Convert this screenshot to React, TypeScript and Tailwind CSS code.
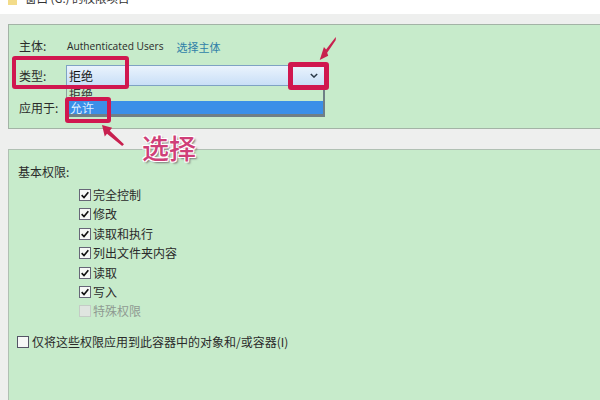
const cjk = { fontFamily: '"Noto Sans CJK SC", "Liberation Sans", sans-serif' };

function Check({ label, on = true, disabled = false }: { label: string; on?: boolean; disabled?: boolean }) {
  return (
    <div className={`flex items-center h-[19.4px] gap-[2px] text-[12px] ${disabled ? 'text-[#8f9a92]' : 'text-[#2a2a2a]'}`}>
      <span className={`w-[12px] h-[12px] border flex items-center justify-center ${disabled ? 'border-[#c4ccc6] bg-[#dfe5e0]' : 'border-[#667] bg-[#f6f8f6]'}`}>
        {on && (
          <svg viewBox="0 0 12 12" className="w-[10px] h-[10px]">
            <path d="M2 6.2 L4.8 9 L10 2.8" fill="none" stroke="#111" strokeWidth="2" />
          </svg>
        )}
      </span>
      <span>{label}</span>
    </div>
  );
}

function Arrow({ className, flip }: { className: string; flip?: boolean }) {
  return (
    <svg viewBox="0 0 24 24" preserveAspectRatio="none" className={`absolute ${className}`}>
      <path
        d={flip ? 'M0 0 L11 3 L8.5 6.5 L24 22 L22 24 L5.5 10 L3 13 Z' : 'M24 0 L22 1.5 L10 13 L7 10.5 L1 24 L13 19.5 L11.5 16.5 L23.5 3.5 Z'}
        fill="#c8204f"
      />
    </svg>
  );
}

export default function App() {
  return (
    <div className="relative w-[600px] h-[400px] overflow-hidden bg-[#eeefee] text-[#2a2a2a]" style={cjk}>
      <div className="h-[14px] bg-white flex items-start pl-[8px] overflow-hidden">
        <span className="w-[9px] h-[5px] bg-[#f3dc8a] mr-[8px] shrink-0" />
        <span className="text-[11.5px] leading-[14px] -translate-y-[9px] text-[#333]">窗口 (G:) 的权限项目</span>
      </div>
      <div className="pl-[8px] pt-[10px]">
        <section className="h-[105px] bg-[#c7ebcb] border border-[#a3b3a6] border-r-0 pl-[10px] pt-[11px]">
          <div className="flex items-center h-[20px] text-[12px]">
            <span className="w-[48px]">主体:</span>
            <span className="text-[10.2px] translate-y-[1px]" style={{ fontFamily: '"Open Sans", sans-serif' }}>Authenticated Users</span>
            <span className="ml-[13px] text-[#2f7fa8] text-[11px] translate-y-[1px]">选择主体</span>
          </div>
          <div className="flex items-center h-[21px] mt-[9px] text-[12px]">
            <span className="w-[47px]">类型:</span>
            <div className="w-[259px] h-[21px] flex items-center justify-between pl-[2px] pr-[6px] border border-[#7fa2c4] bg-gradient-to-b from-[#eaf3fd] to-[#c9dff7] text-[12px] text-[#111]">
              <span>拒绝</span>
              <svg viewBox="0 0 10 6" className="w-[8px] h-[5px]">
                <path d="M1 1 L5 5 L9 1" fill="none" stroke="#2b3a48" strokeWidth="1.8" />
              </svg>
            </div>
          </div>
          <div className="flex items-center h-[20px] mt-[12px] text-[12px]">
            <span>应用于:</span>
          </div>
        </section>
        <div className="h-[20px]" />
        <section className="h-[252px] bg-[#c7ebcb] border border-[#b0c0b3] border-r-0 pl-[9px] pt-[12px]">
          <div className="text-[12px] leading-[20px]">基本权限:</div>
          <div className="pl-[61px] mt-[3.3px]">
            <Check label="完全控制" />
            <Check label="修改" />
            <Check label="读取和执行" />
            <Check label="列出文件夹内容" />
            <Check label="读取" />
            <Check label="写入" />
            <Check label="特殊权限" on={false} disabled />
          </div>
          <div className="flex items-center gap-[3px] mt-[12px] -ml-[1px] text-[12px]">
            <span className="w-[12px] h-[12px] border border-[#556] bg-[#f6f8f6]" />
            <span>仅将这些权限应用到此容器中的对象和/或容器(I)</span>
          </div>
        </section>
      </div>

      {/* dropdown list */}
      <div className="absolute left-[66px] top-[87px] w-[259px] h-[30px] overflow-hidden bg-[#c7ebcb] border-r-2 border-b-[3px] border-[#6f7f86] border-l border-l-[#8fa0a0] text-[12px]">
        <div className="h-[14px] leading-[14px] pl-[2px] text-[#333]">拒绝</div>
        <div className="h-[13px] leading-[13px] bg-[#3b8fe8] pl-[3px] text-[#dff0ff]">允许</div>
      </div>

      {/* red callouts */}
      <div className="absolute left-[12px] top-[56px] w-[117px] h-[33px] border-[4px] border-[#d0174f] rounded-[3px]" />
      <div className="absolute left-[288px] top-[62px] w-[41px] h-[28px] border-[5px] border-[#d0174f] rounded-[3px]" />
      <div className="absolute left-[65px] top-[97px] w-[46px] h-[26px] border-[4px] border-[#d0174f] rounded-[3px]" />
      <Arrow className="left-[319px] top-[37px] w-[17px] h-[23px]" />
      <Arrow flip className="left-[102px] top-[125px] w-[22px] h-[21px]" />
      <div className="absolute left-[142px] top-[130px] text-[27px] leading-[36px] font-medium text-[#cf3f78] [text-shadow:1px_1px_0_#fff,-1px_-1px_0_#fff,1px_-1px_0_#fff,-1px_1px_0_#fff,2px_2px_2px_#777]">
        选择
      </div>
    </div>
  );
}
